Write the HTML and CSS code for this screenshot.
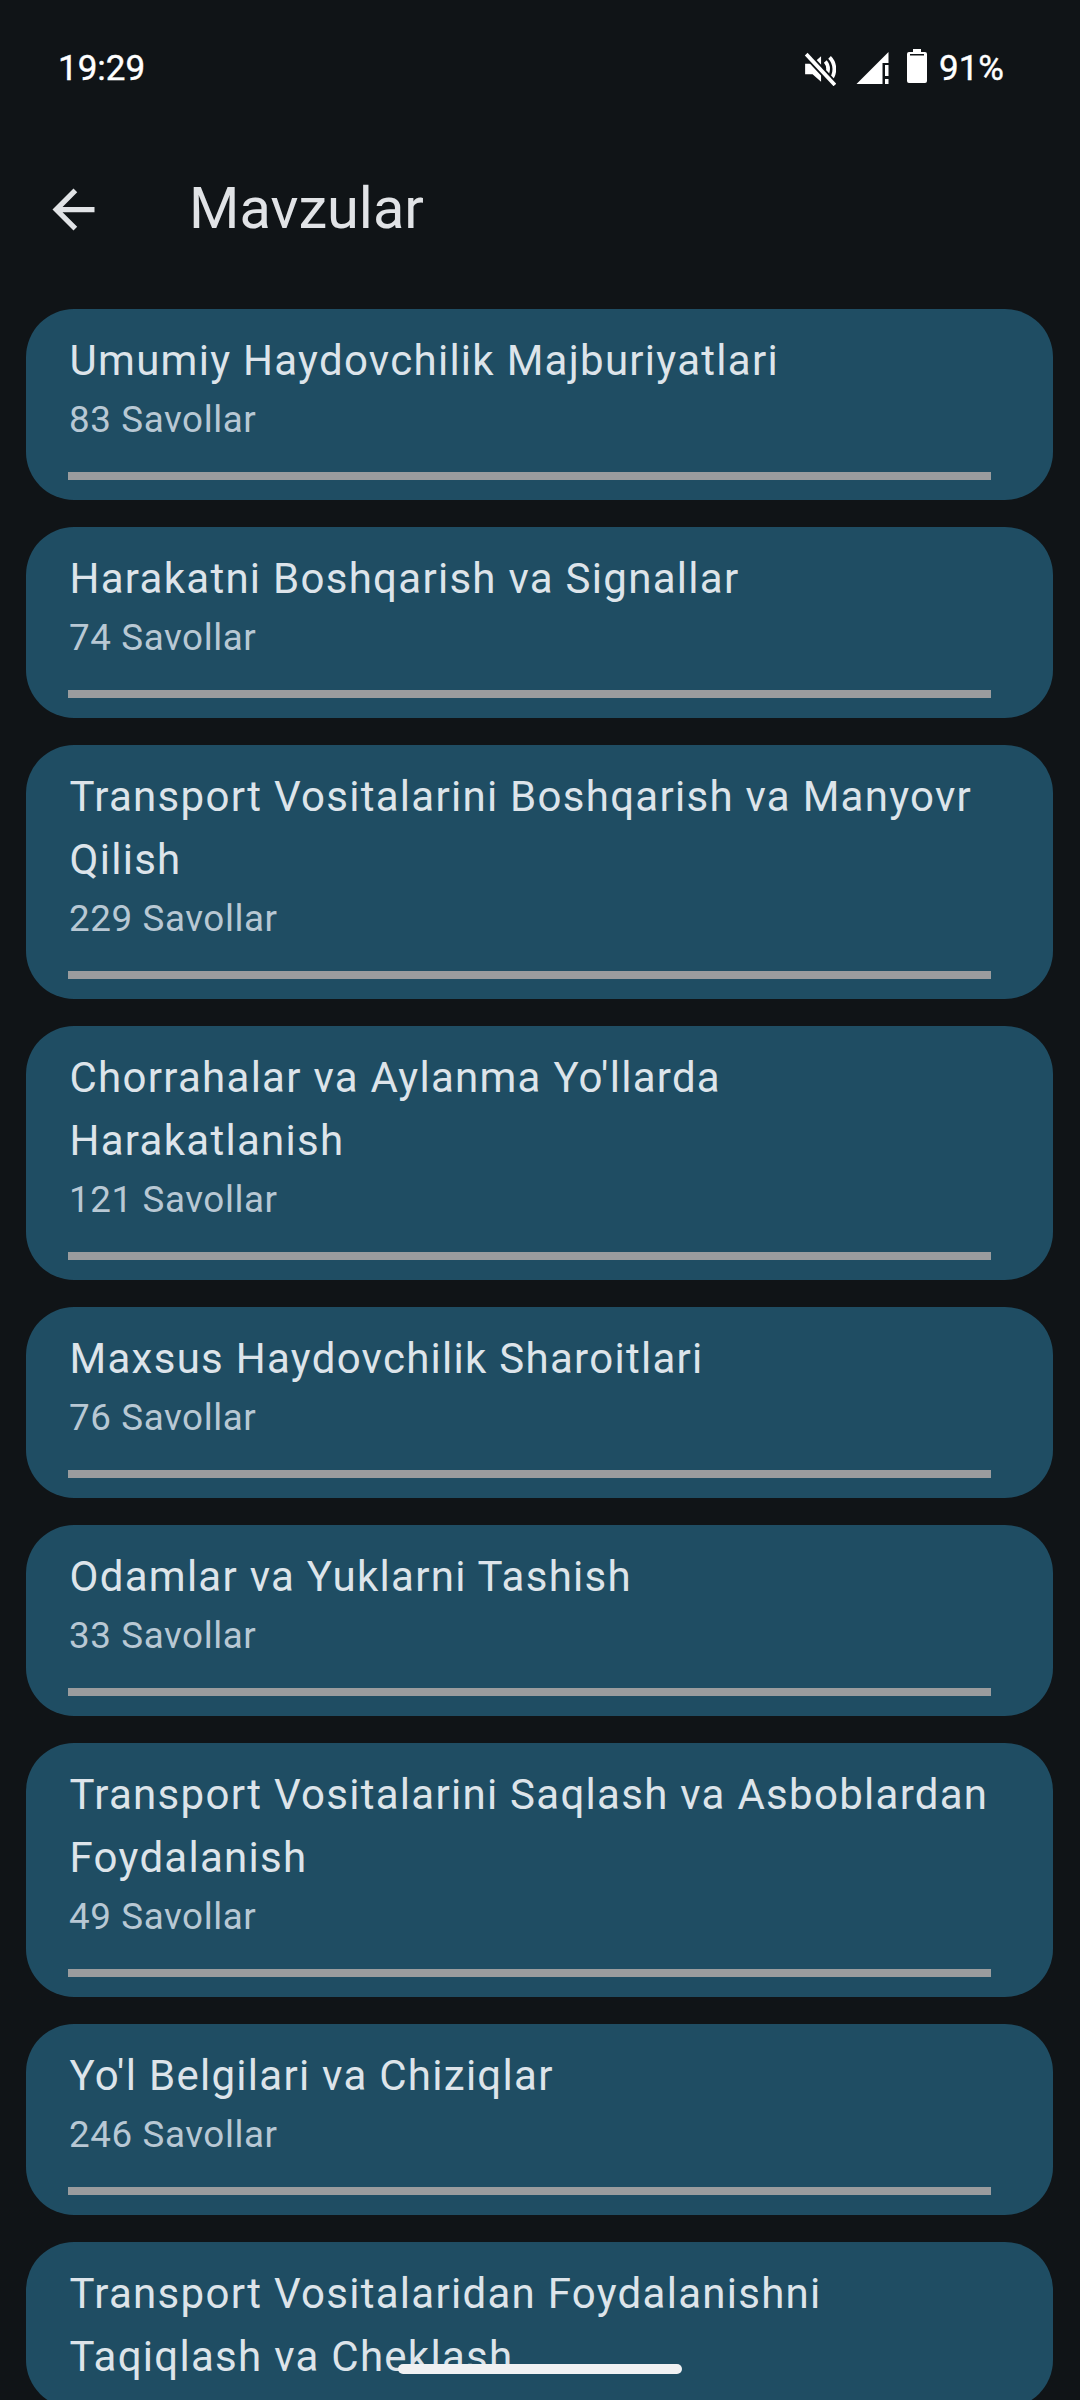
FILE: index.html
```html
<!DOCTYPE html>
<html lang="uz">
<head>
<meta charset="utf-8">
<title>Mavzular</title>
<link rel="stylesheet" href="styles.css">
</head>
<body>
<div class="screen">
  <div class="status-bar">
    <span class="time">19:29</span>
    <div class="status-icons">
      <svg class="ic-mute" viewBox="0 0 30 32"><path d="M1 11h7l8-7v24l-8-7H1z" fill="#fff"/><path d="M20 9c3.500 4 3.500 10 0 14M24 5c6 6 6 16 0 22" fill="none" stroke="#fff" stroke-width="3.500"/><path d="M2 2l27 29" stroke="#101417" stroke-width="7"/><path d="M2 2l27 29" stroke="#fff" stroke-width="3.500"/></svg>
      <svg class="ic-signal" viewBox="0 0 32 32"><path d="M0 32L32 0v11h-6v21z" fill="#fff"/><path d="M28.500 13H32v11h-3.500zM28.500 27H32v5h-3.500z" fill="#fff"/></svg>
      <svg class="ic-battery" viewBox="0 0 20 34"><path d="M6 0h8v3h4a2 2 0 0 1 2 2v27a2 2 0 0 1-2 2H2a2 2 0 0 1-2-2V5a2 2 0 0 1 2-2h4z" fill="#fff"/><path d="M3 5h14v1.500H3z" fill="#101417"/></svg>
      <span class="pct">91%</span>
    </div>
  </div>
  <header class="app-bar">
    <svg class="back" viewBox="0 0 24 24"><path fill="#e1e3e6" d="M20 11H7.830l5.590-5.590L12 4l-8 8 8 8 1.410-1.410L7.830 13H20v-2z"/></svg>
    <h1 class="heading">Mavzular</h1>
  </header>
  <main class="list">
    <article class="card"><div class="title">Umumiy Haydovchilik Majburiyatlari</div><div class="sub">83 Savollar</div><div class="bar"></div></article>
    <article class="card"><div class="title">Harakatni Boshqarish va Signallar</div><div class="sub">74 Savollar</div><div class="bar"></div></article>
    <article class="card"><div class="title">Transport Vositalarini Boshqarish va Manyovr Qilish</div><div class="sub">229 Savollar</div><div class="bar"></div></article>
    <article class="card"><div class="title">Chorrahalar va Aylanma Yo'llarda Harakatlanish</div><div class="sub">121 Savollar</div><div class="bar"></div></article>
    <article class="card"><div class="title">Maxsus Haydovchilik Sharoitlari</div><div class="sub">76 Savollar</div><div class="bar"></div></article>
    <article class="card"><div class="title">Odamlar va Yuklarni Tashish</div><div class="sub">33 Savollar</div><div class="bar"></div></article>
    <article class="card"><div class="title">Transport Vositalarini Saqlash va Asboblardan Foydalanish</div><div class="sub">49 Savollar</div><div class="bar"></div></article>
    <article class="card"><div class="title">Yo'l Belgilari va Chiziqlar</div><div class="sub">246 Savollar</div><div class="bar"></div></article>
    <article class="card"><div class="title">Transport Vositalaridan Foydalanishni Taqiqlash va Cheklash</div></article>
  </main>
  <div class="gesture"></div>
</div>
</body>
</html>
```
FILE: styles.css
```css
html, body {
  margin: 0;
  padding: 0;
  background: #101417;
}
.screen {
  position: relative;
  width: 1080px;
  height: 2400px;
  overflow: hidden;
  background: #101417;
  font-family: Roboto, sans-serif;
}
.status-bar {
  height: 125px;
  box-sizing: border-box;
  padding: 0 76px 0 58px;
  display: flex;
  justify-content: space-between;
  align-items: flex-start;
  color: #fff;
}
.time, .pct {
  font-size: 35px;
  font-weight: 400;
  line-height: 40px;
  margin-top: 49px;
  -webkit-text-stroke: 0.4px #fff;
}
.status-icons {
  display: flex;
  align-items: flex-start;
}
.ic-mute { width: 32px; height: 34px; margin-top: 52px; margin-right: 20px; }
.ic-signal { width: 33px; height: 32px; margin-top: 52px; margin-right: 18px; }
.ic-battery { width: 20px; height: 34px; margin-top: 49px; margin-right: 12px; }
.app-bar {
  height: 168px;
  display: flex;
  align-items: center;
  padding-left: 42px;
}
.back {
  width: 63px;
  height: 63px;
  flex: none;
}
.heading {
  margin: 0 0 0 84px;
  font-size: 57.750px;
  font-weight: 400;
  color: #e1e3e6;
  transform: translateY(-1px);
}
.list {
  margin-top: 16px;
  padding: 0 27px 0 26px;
  display: flex;
  flex-direction: column;
  gap: 27px;
}
.card {
  background: #1f4d63;
  border-radius: 48px;
  padding: 20px 62px 20px 42px;
}
.title {
  font-size: 42px;
  line-height: 63px;
  letter-spacing: 1.280px;
  color: #dde4ea;
  padding-left: 1.500px;
  margin-top: -0.500px;
}
.sub {
  font-size: 36.750px;
  line-height: 52.500px;
  letter-spacing: 0.600px;
  color: #b8c8d4;
  padding-left: 1px;
  margin-top: 2.500px;
}
.bar {
  height: 8px;
  margin-top: 25.500px;
  background: #9a9c9e;
}
.gesture {
  position: absolute;
  left: 398px;
  top: 2364px;
  width: 284px;
  height: 10px;
  border-radius: 5px;
  background: #f0f1f3;
}
```
